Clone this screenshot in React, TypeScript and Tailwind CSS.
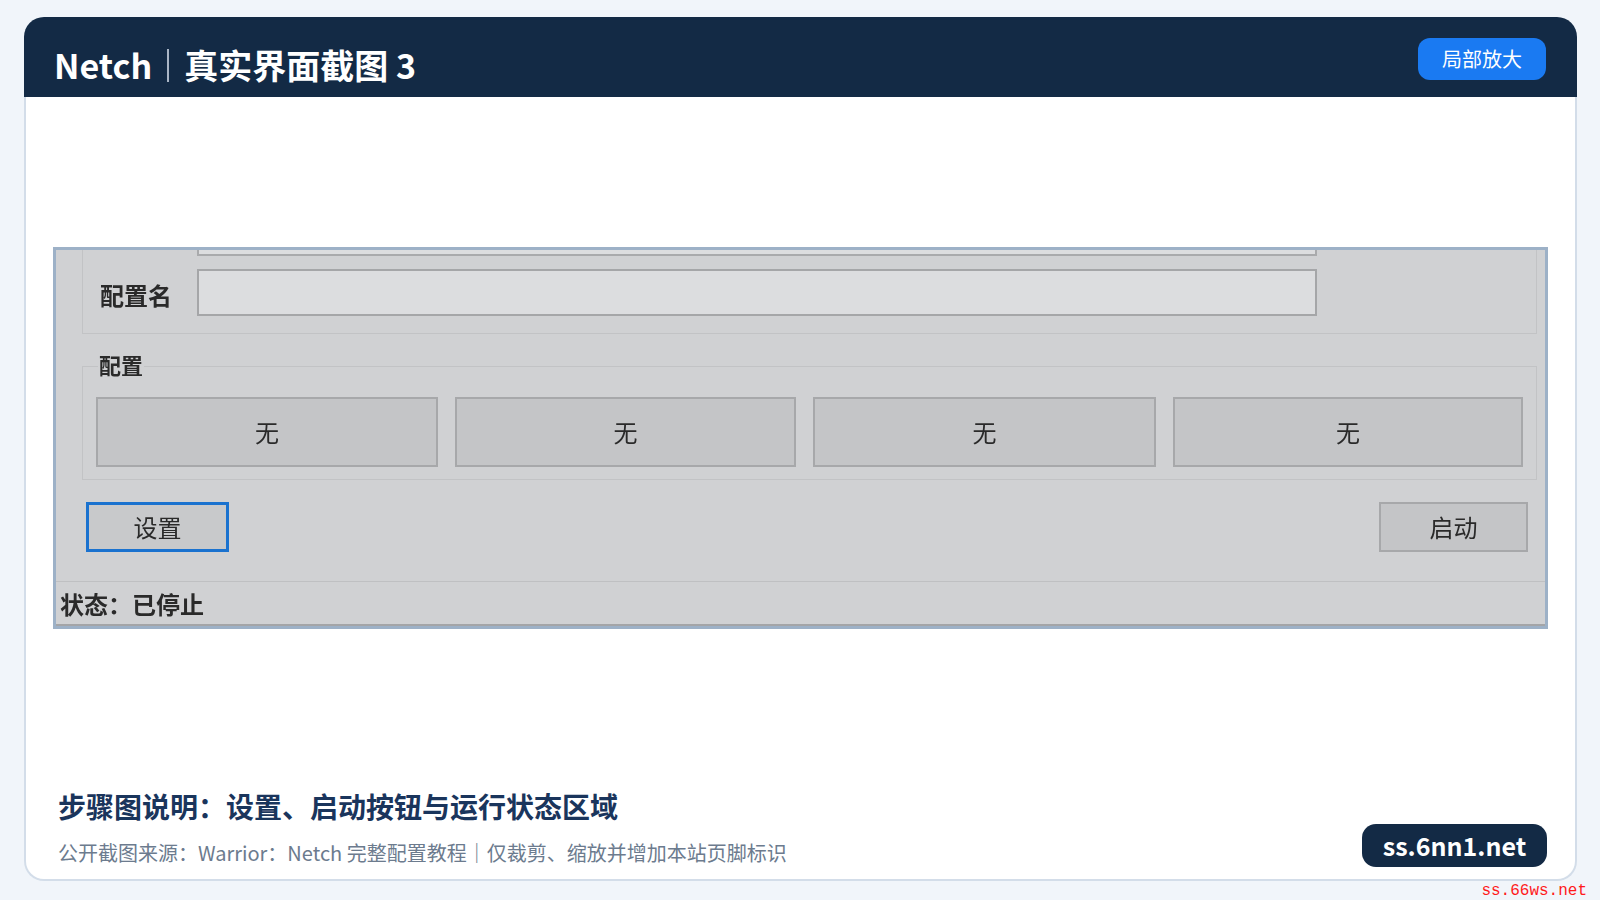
// Scaled screenshot of the Netch main window (config + start area)
function NetchWindow() {
  return (
    <div className="mx-[27px] border-[3px] border-[#9db1c7] bg-[#d0d1d3] text-[#2a2a2a] blur-[0.4px]">
      {/* profile group, top edge cut off */}
      <div className="ml-[26px] mr-[8px] border-x border-b border-[#c2c3c5] pb-[17px]">
        <div className="ml-[114px] h-[6px] w-[1120px] border-x-2 border-b-2 border-[#a9aaac] bg-[#dcdddf]" />
        <div className="mt-[13px] flex items-center">
          <span className="w-[114px] pl-[17px] pt-[4px] text-[24px] font-semibold leading-none">配置名</span>
          <div className="h-[47px] w-[1120px] border-2 border-[#a5a6a8] bg-[#dcdddf]" />
        </div>
      </div>

      {/* 配置 group */}
      <div className="relative mt-[32px] ml-[26px] mr-[8px] border border-[#c2c3c5] px-[13px] pt-[30px] pb-[12px]">
        <span className="absolute -top-[17px] left-[15px] bg-[#d0d1d3] px-[1px] text-[22px] font-semibold leading-[28px]">
          配置
        </span>
        <div className="grid grid-cols-[342px_341px_343px_1fr] gap-[17px]">
          {[0, 1, 2, 3].map((i) => (
            <div
              key={i}
              className="flex h-[70px] items-center justify-center border-2 border-[#a7a8aa] bg-[#c4c5c7] text-[24px]"
            >
              无
            </div>
          ))}
        </div>
      </div>

      <div className="mt-[22px] flex items-center justify-between pl-[30px] pr-[17px]">
        <div className="flex h-[50px] w-[143px] items-center justify-center border-[3px] border-[#1a72cf] bg-[#c8c9cb] text-[24px]">
          设置
        </div>
        <div className="flex h-[50px] w-[149px] items-center justify-center border-2 border-[#a7a8aa] bg-[#c4c5c7] text-[24px]">
          启动
        </div>
      </div>

      {/* status bar */}
      <div className="mt-[29px] flex h-[45px] items-center border-t border-b-2 border-t-[#bfc0c2] border-b-[#a4a5a7] pl-[4px] pt-[2px] text-[24px] font-semibold">
        状态：已停止
      </div>
    </div>
  );
}

export default function App() {
  return (
    <div
      className="relative h-[900px] w-full bg-[#f1f5fa] pt-[17px] pl-[24px] pr-[23px]"
      style={{ fontFamily: '"Noto Sans CJK SC", "Noto Sans", sans-serif' }}
    >
      <div className="flex h-[864px] flex-col">
        <header className="flex h-[80px] shrink-0 items-start justify-between rounded-t-[20px] bg-[#132a45] pl-[30px] pr-[31px]">
          <h1 className="mt-[28px] flex items-center text-[34px] font-bold leading-[40px] text-white">
            <span>Netch</span>
            <span className="mx-[15px] h-[33px] w-[2px] bg-[#a9b5c5]" />
            <span>真实界面截图 3</span>
          </h1>
          <button className="mt-[21px] flex h-[42px] w-[128px] items-center justify-center rounded-[12px] bg-[#1a7af2] text-[20px] text-white">
            局部放大
          </button>
        </header>

        <div className="flex flex-1 flex-col rounded-b-[20px] border-x-2 border-b-2 border-[#d3dde9] bg-white">
          <div className="pt-[150px]">
            <NetchWindow />
          </div>

          <footer className="mt-auto flex items-end justify-between pl-[32px] pr-[28px] pb-[12px]">
            <div>
              <h2 className="text-[28px] font-bold leading-[36px] text-[#1a355c]">
                步骤图说明：设置、启动按钮与运行状态区域
              </h2>
              <p className="mt-[15px] text-[20px] leading-[28px] text-[#6c7b8e]">
                公开截图来源：Warrior：Netch 完整配置教程｜仅裁剪、缩放并增加本站页脚标识
              </p>
            </div>
            <div className="flex h-[43px] w-[185px] items-center justify-center rounded-[14px] bg-[#132a45] text-[25px] font-bold text-white">
              ss.6nn1.net
            </div>
          </footer>
        </div>
      </div>

      <span
        className="absolute bottom-[0px] right-[13px] text-[16px] leading-[18px] text-[#ff1a1a]"
        style={{ fontFamily: '"Liberation Mono", monospace' }}
      >
        ss.66ws.net
      </span>
    </div>
  );
}
